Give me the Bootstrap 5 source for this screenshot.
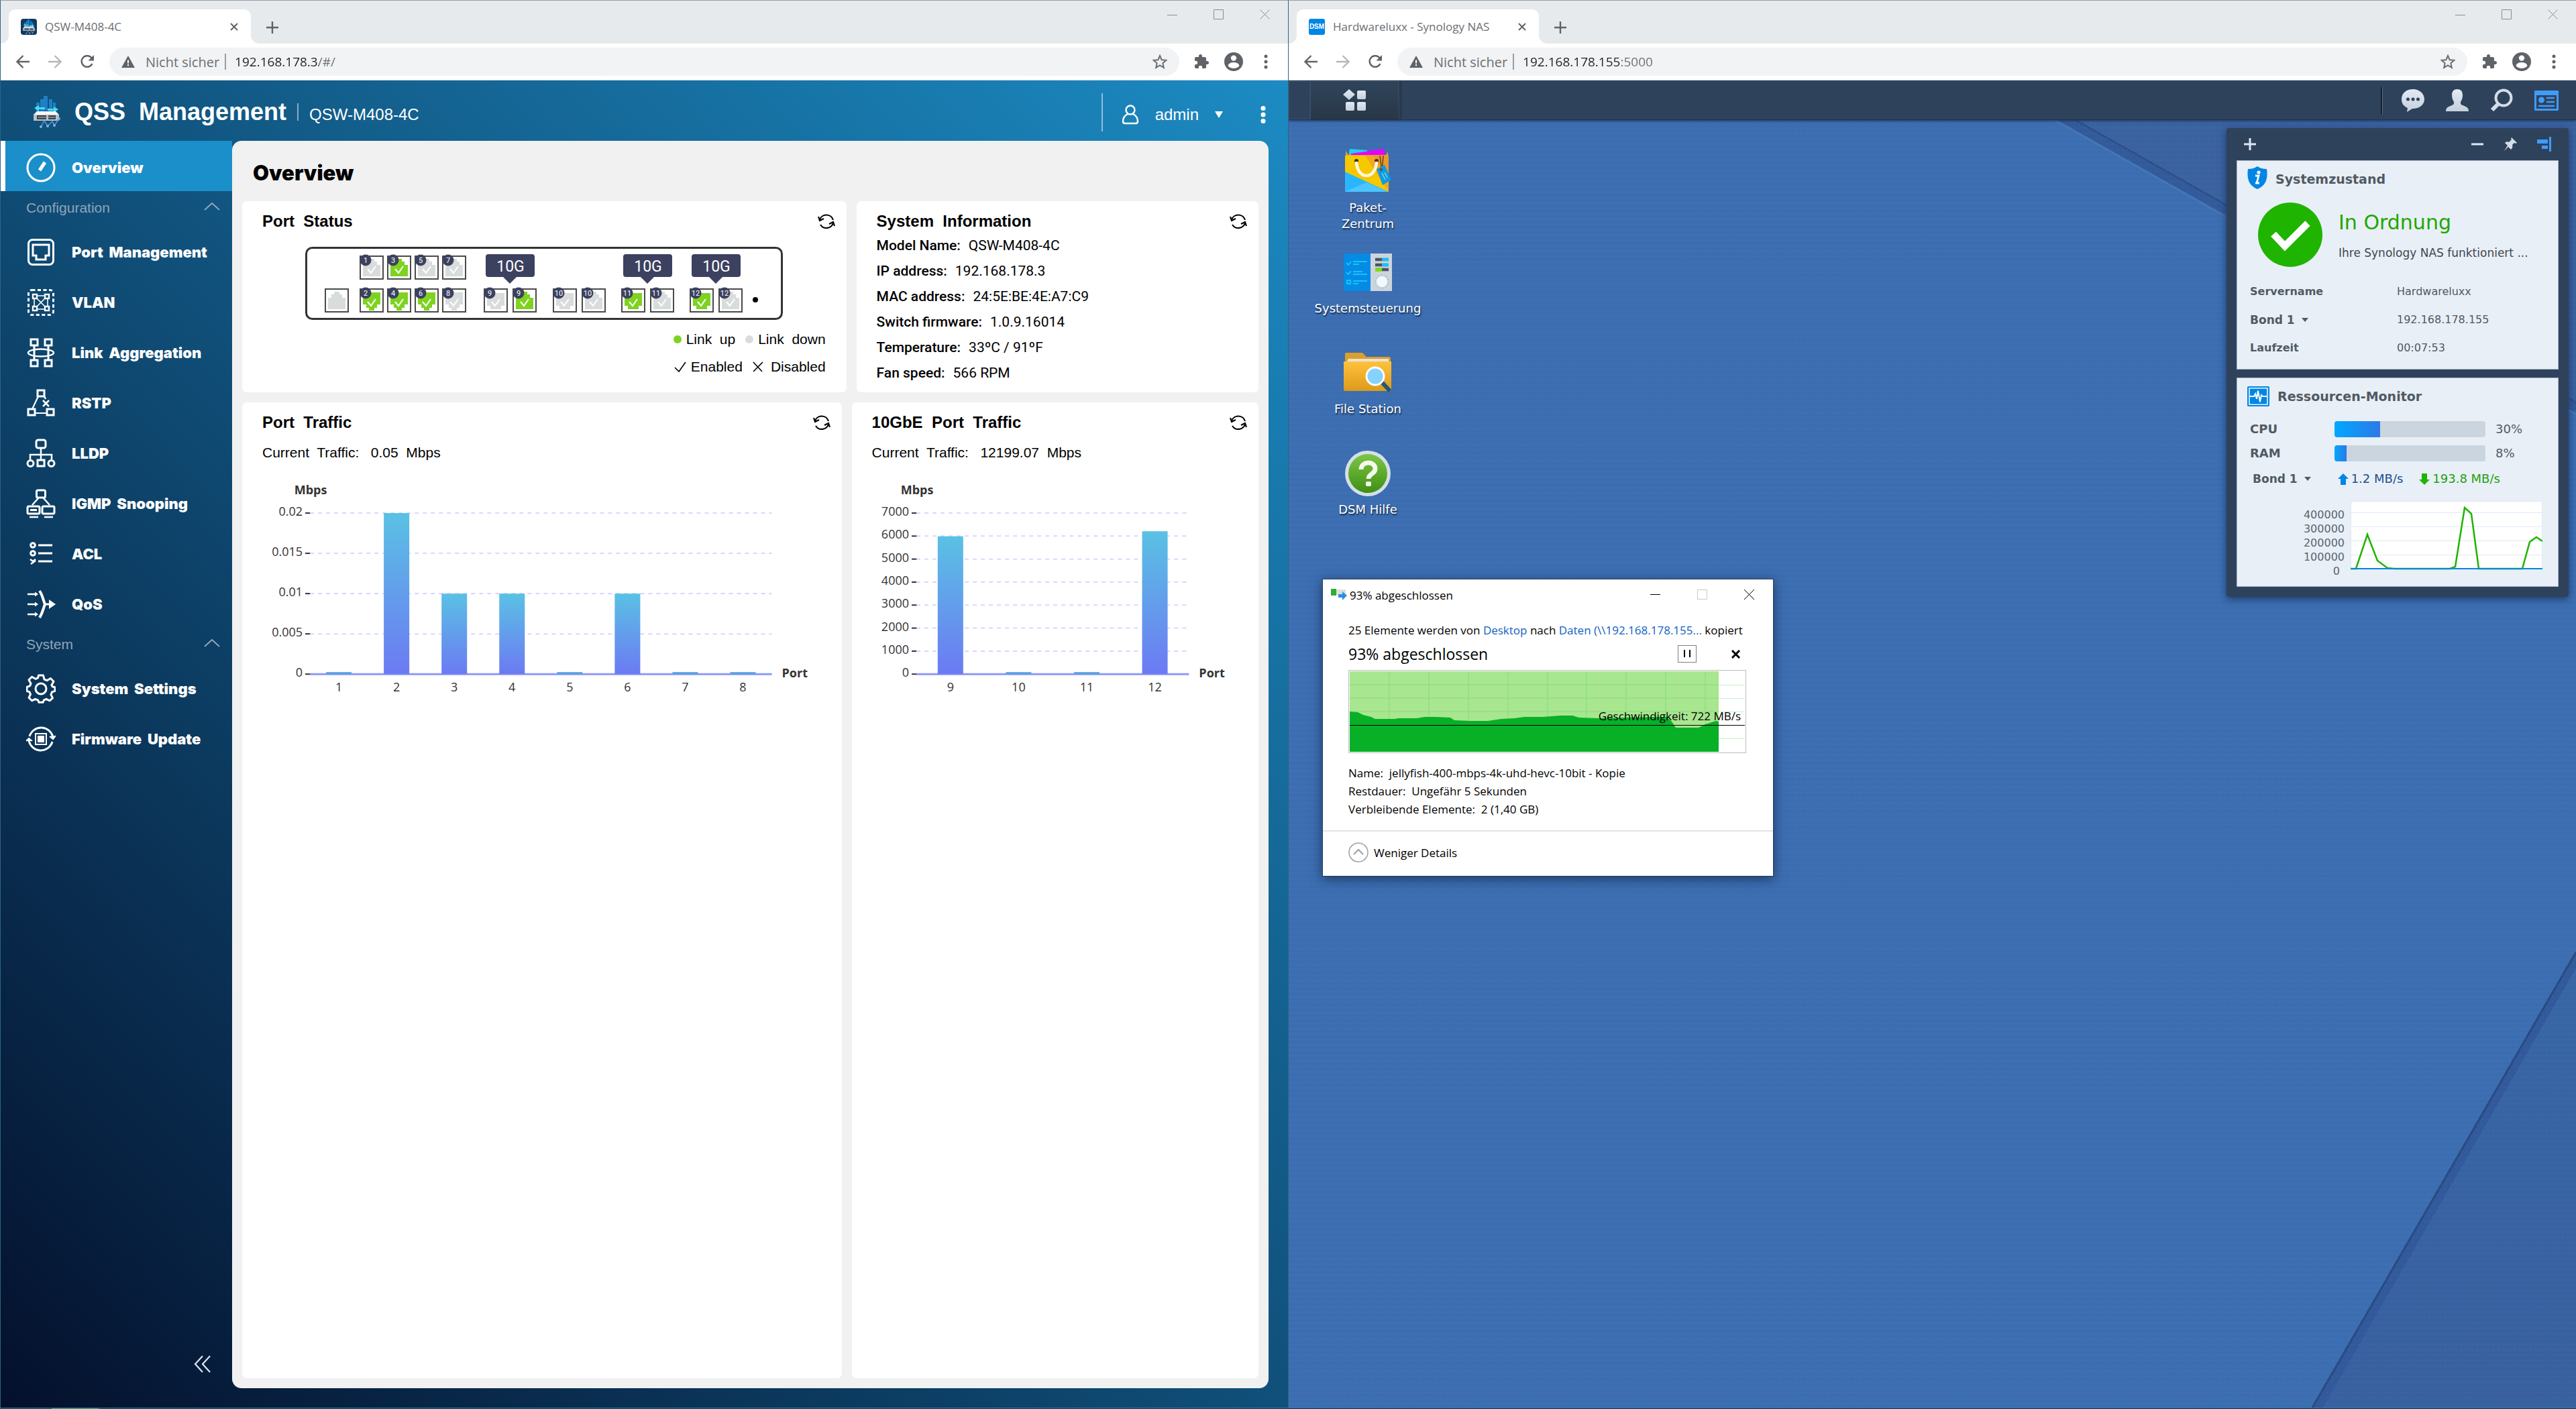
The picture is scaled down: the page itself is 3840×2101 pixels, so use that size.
<!DOCTYPE html>
<html lang="de">
<head>
<meta charset="utf-8">
<meta name="viewport" content="width=device-width, initial-scale=1">
<title>QSS Management / Synology NAS</title>
<link href="https://cdn.jsdelivr.net/npm/bootstrap@5.3.0/dist/css/bootstrap.min.css" rel="stylesheet">
<style>
  body { font-family: Roboto, "Liberation Sans", sans-serif; background: #16324f; min-height: 100vh; line-height: 1.2; }
  button { background: none; border: 0; padding: 0; color: inherit; }
  svg { display: block; flex: none; }
  .win { flex: 1 1 0; min-width: 0; border-left: 1px solid #2c6487; border-top: 1px solid #9a9ea2; position: relative; }

  /* browser frame */
  .tabstrip { height: 64px; background: #e6eaed; color: #5f6368; }
  .browser-tab { width: 361px; height: 51px; margin: 0 22px 0 12px; padding: 0 19px 0 18px; background: #fff; border-radius: 10px 10px 0 0; font: 17px "Open Sans", sans-serif; color: #6b6f73; position: relative; }
  .browser-tab::before, .browser-tab::after { content: ""; position: absolute; bottom: 0; width: 12px; height: 12px; }
  .browser-tab::before { left: -12px; background: radial-gradient(circle at 0 0, transparent 12px, #fff 12px); }
  .browser-tab::after { right: -12px; background: radial-gradient(circle at 100% 0, transparent 12px, #fff 12px); }
  .win-ctl { width: 69px; height: 42px; }
  .toolbar { height: 55px; padding: 0 9px; background: #fff; border-bottom: 1px solid #cfd3d7; color: #5f6368; }
  .tool-btn { width: 48px; height: 42px; }
  .omnibox { height: 42px; margin: 0 9px; padding: 0 18px; border-radius: 21px; background: #f1f3f4; font: 20px "Open Sans", sans-serif; color: #6b6f73; }
  .omnibox input { border: 0; outline: 0; padding: 0; font-size: 19px; color: #202124; -webkit-text-fill-color: transparent; background: linear-gradient(90deg, #202124 125px, #6b6f73 0); -webkit-background-clip: text; background-clip: text; }
  .omnibox .long-host { background-image: linear-gradient(90deg, #202124 145px, #6b6f73 0); }
  .omnibox .bar { width: 2px; height: 24px; background: #9a9da1; margin: 0 13px 0 8px; }

  /* switch management */
  .qss { background: linear-gradient(to top right, #04102c, #10507a 50%, #1c8bc3); font-family: "Liberation Sans", Arial, sans-serif; color: #fff; }
  .qss-head { height: 90px; padding: 4px 25px 0 46px; }
  .qss-name { font-size: 36px; font-weight: 700; }
  .qss-side { width: 345px; }
  .side-link { height: 75px; padding: 4px 0 0 38px; gap: 24px; color: #fff; font: 900 22px Inter, "Liberation Sans", sans-serif; text-decoration: none; }
  .side-link.active { background: #1b8fc9; border-left: 7px solid #fff; padding-left: 31px; }
  .side-link svg { width: 44px; height: 44px; fill: none; stroke: #fff; stroke-width: 3; }
  .side-sect { height: 51px; padding: 0 18px 2px 38px; font-size: 21px; color: #8fa6b8; }
  .panel { margin: 0 29px 29px 0; padding: 0 15px 15px; background: #f1f1f1; border-radius: 14px; color: #000; }
  .panel h1 { height: 90px; padding: 4px 16px 0; margin: 0; font: 900 31px Inter, sans-serif; display: flex; align-items: center; }
  .row-top { display: grid; grid-template-columns: 900fr 599fr; gap: 15px; }
  .row-bot { display: grid; grid-template-columns: 893fr 606fr; gap: 15px; margin-top: 15px; }
  .tile { background: #fff; border-radius: 7px; padding: 0 17px 0 30px; font-size: 21px; }
  .row-top .tile { height: 285px; }
  .tile h2 { font-size: 24px; font-weight: 700; margin: 0; }
  .tile-head { height: 60px; }
  .tile-head svg { width: 26px; height: 26px; }
  .tile-body { margin-right: 14px; }
  .traffic-now { margin: 0 0 22px; padding-top: 2px; }
  .facts { font: 21px Roboto, sans-serif; margin: -6px 0 0; }
  .facts div { height: 38px; display: flex; gap: 12px; }
  .facts dt { font-weight: 500; }
  .facts dd { margin: 0; }
  .legend-line { height: 41px; gap: 7px; }
  .led { width: 12px; height: 12px; border-radius: 6px; }
  .led-up { background: #7ed321; }
  .led-down { background: #d9dcdc; }
  .chart { width: 100%; font: 18px "Open Sans", sans-serif; fill: #333; }
  .chart .axis-name { font-weight: 700; }

  /* NAS desktop */
  .dsm { background: #3b6cb0; font-family: "DejaVu Sans", Verdana, sans-serif; position: relative; overflow: hidden; }
  .wallpaper { position: absolute; inset: 0; width: 100%; height: 100%; }
  .dsm-bar { position: relative; height: 59px; background: #2e425c; border-bottom: 1px solid #22344b; box-shadow: 0 1px 4px #1c3358; padding: 1px 26px 0 0; }
  .dsm-edge { width: 32px; border: 1px solid #3b4f66; }
  .dsm-menu { width: 133px; background: linear-gradient(#2f445b, #293747); border: 1px solid #3c5068; border-bottom: 0; margin-right: auto; box-shadow: 2px 0 3px #22303f; }
  .dsm-sep { width: 3px; height: 40px; background: linear-gradient(90deg, #17212e 60%, #5a6a7c 60%); margin-right: 28px; }
  .dsm-tray { gap: 32px; }
  .shortcuts { position: relative; width: 236px; padding-top: 35px; }
  .shortcut { height: 150px; color: #fff; font-size: 18px; line-height: 24px; text-decoration: none; text-align: center; text-shadow: 1px 2px 2px #10233f; }
  .shortcut .pic { height: 84px; }
  .widget { position: absolute; top: 71px; right: 11px; width: 510px; padding: 0 15px 15px; background: #2e425c; border-radius: 4px; box-shadow: 0 3px 12px #1d3866; }
  .widget-head { height: 48px; padding: 0 10px 0 11px; gap: 30px; }
  .wcard { background: #e9eff6; border: 1px solid #a9b8c8; color: #505a64; font-size: 16px; padding: 0 20px 10px 15px; }
  .wcard + .wcard { margin-top: 12px; padding-top: 12px; }
  .wcard h3 { font-size: 19px; font-weight: 700; margin: 0; }
  .wcard th { font-weight: 700; width: 223px; padding: 0 0 0 4px; }
  .wcard td { padding: 0; }
  .wcard tr { height: 42px; }
  .bond { font-size: 17px; font-weight: 700; color: #505a64; display: inline-flex; align-items: center; gap: 10px; }
  .meter-line { height: 36px; font-size: 18px; padding-left: 4px; }
  .meter-line b { width: 126px; }
  .meter-line .progress { width: 225px; height: 24px; border-radius: 4px; background: #cbd5df; margin-right: 15px; }
  .meter-line .progress-bar { background: linear-gradient(90deg, #00a8ff, #2d79e6); }
  .rate-line { height: 40px; }
  .rate-up { color: #22508f; }
  .rate-down { color: #1fa010; }
  .ok-title { font-size: 30px; color: #1fa800; line-height: 38px; }
  .ok-text { font-size: 17px; color: #3f4650; }

  /* copy dialog */
  .copydlg { position: absolute; left: 50px; top: 862px; width: 673px; height: 444px; background: #fff; border: 1px solid #2a4058; box-shadow: 0 4px 16px #1f3a66; font: 17px "Open Sans", sans-serif; color: #000; }
  .copydlg a { color: #0f62c4; text-decoration: none; }
  .copy-title { height: 46px; padding-left: 12px; }
  .copy-main { padding: 0 40px 0 38px; }
  .copy-line { padding-top: 18px; }
  .copy-done { font-size: 23px; }
  .copy-ctl { width: 70px; height: 44px; }
  .speed { width: 593px; height: 124px; font: 17px "Open Sans", sans-serif; }
  .copy-facts p { margin: 0; line-height: 27px; }
  .copy-foot { border-top: 2px solid #e3e3e3; padding-left: 38px; gap: 8px; }
  .taskline { height: 2px; background: linear-gradient(90deg, #1f3a4e 77px, #4a9a62 77px 145px, #16324f 150px); border-top: 1px solid #2a7fa5; }
</style>
<script src="https://cdn.jsdelivr.net/npm/bootstrap@5.3.0/dist/js/bootstrap.bundle.min.js"></script>
</head>
<body class="d-flex flex-column">

<svg width="0" height="0" class="position-absolute" aria-hidden="true">
  <defs>
    <symbol id="i-x" viewBox="0 0 12 12"><path d="M1 1l10 10M11 1L1 11" stroke="#5f6368" stroke-width="2" fill="none"/></symbol>
    <symbol id="i-plus" viewBox="0 0 20 20"><path d="M10 1v18M1 10h18" stroke="#5f6368" stroke-width="2.4" fill="none"/></symbol>
    <symbol id="w-min" viewBox="0 0 16 16"><path d="M0 8.5h15" stroke="#8a8d90" fill="none"/></symbol>
    <symbol id="w-max" viewBox="0 0 16 16"><path d="M.5 .5h14v14h-14z" stroke="#8a8d90" fill="none"/></symbol>
    <symbol id="w-close" viewBox="0 0 16 16"><path d="M.5 .5l14 14M14.500 .5l-14 14" stroke="#8a8d90" fill="none"/></symbol>
    <symbol id="i-back" viewBox="0 0 20 20"><path d="M20 10H2M10.500 1L1.500 10l9 9" stroke="currentColor" stroke-width="2.300" fill="none"/></symbol>
    <symbol id="i-fwd" viewBox="0 0 20 20"><path d="M0 10h18M9.500 1l9 9-9 9" stroke="#b4b7ba" stroke-width="2.300" fill="none"/></symbol>
    <symbol id="i-reload" viewBox="0 0 22 20"><path d="M18 5A8.300 8.300 0 1 0 18.500 13" stroke="currentColor" stroke-width="2.500" fill="none"/><path d="M21 0v8.500h-8.500z" fill="currentColor"/></symbol>
    <symbol id="i-warn" viewBox="0 0 20 18"><path d="M10 0l10 18H0z" fill="#5f6368"/><path d="M9 6.500h2v5H9zM9 13h2v2.300H9z" fill="#fff"/></symbol>
    <symbol id="i-star" viewBox="0 0 22 22"><path d="M11 2l2.600 6.200 6.800.6-5.100 4.500 1.500 6.600L11 16.400 5.200 19.900l1.500-6.600L1.600 8.800l6.800-.6z" stroke="currentColor" stroke-width="2" fill="none"/></symbol>
    <symbol id="i-puzzle" viewBox="0 0 22 22"><path d="M19.500 10H18V6c0-1-.9-2-2-2h-4V2.600a2.500 2.500 0 0 0-5 0V4H3C2 4 1 5 1 6v3.800h1.500a2.700 2.700 0 0 1 0 5.400H1V19c0 1.100 1 2 2 2h3.800v-1.500a2.700 2.700 0 0 1 5.400 0V21H16c1.100 0 2-.9 2-2v-4h1.500a2.500 2.500 0 0 0 0-5z" fill="currentColor"/></symbol>
    <symbol id="i-person" viewBox="0 0 28 28"><circle cx="14" cy="14" r="14" fill="currentColor"/><circle cx="14" cy="8.600" r="4.200" fill="#fff"/><ellipse cx="14" cy="19.500" rx="8.300" ry="4.400" fill="#fff"/></symbol>
    <symbol id="i-dots" viewBox="0 0 6 22"><circle cx="3" cy="3" r="2.500"/><circle cx="3" cy="11" r="2.500"/><circle cx="3" cy="19" r="2.500"/></symbol>
    <symbol id="i-refresh" viewBox="0 0 26 26"><g fill="none" stroke="#000" stroke-width="2.100"><path d="M3 10.500A10.500 10.500 0 0 1 23 11M23 15.500A10.500 10.500 0 0 1 4 18"/><path d="M1 6l2 6 6-3M25 20l-2-6-6 3"/></g></symbol>
    <symbol id="i-chev" viewBox="0 0 24 12"><path d="M1 11L12 1l11 10" stroke="#8fa6b8" stroke-width="2" fill="none"/></symbol>
    <symbol id="i-caret" viewBox="0 0 10 6"><path d="M0 0h10L5 6z" fill="#505a64"/></symbol>
    <symbol id="p-down" viewBox="0 0 36 36"><path d="M1 1h34v34H1z" fill="#fff" stroke="#4a4a4a" stroke-width="2"/></symbol>
    <path id="rj-up" d="M5 31V14h5v-5h4V5h8v4h4v5h5v17z"/>
    <path id="rj-dn" d="M5 6h26v18h-5v5h-4v4h-8v-4h-4v-5H5z"/>
    <path id="sfp-dn" d="M5 7h26v19h-5v5H10v-5H5z"/>
    <path id="tick" d="M12 20l5 6 7-10" fill="none" stroke="#fff" stroke-width="2"/>
    <linearGradient id="bar" x1="0" y1="0" x2="0" y2="1"><stop offset="0" stop-color="#5ac1e4"/><stop offset="1" stop-color="#6c7af3"/></linearGradient>
    <linearGradient id="silver" x1="0" y1="0" x2="0" y2="1"><stop offset="0" stop-color="#e2eaf3"/><stop offset="1" stop-color="#c4d0dc"/></linearGradient>
    <symbol id="qnap" viewBox="0 0 42 48"><path d="M6 10h5v16H6zM12 5h5v20h-5zM17 0h6v22h-6zM25 5h5v20h-5zM31 10h4v14h-4z" fill="#1f7fc4"/><path d="M3 18l7-4v3h9v3h-9v3zM39 20l-7-4v3h-9v3h9v3z" fill="#45dcf5"/><path d="M7 23h28l5 5H2z" fill="#f5f7f8"/><path d="M2 28h38v9H2z" fill="#b9c2c9"/><path d="M7 29h14v6H7zM24 29h11v6H24z" fill="#3b4650"/><path d="M9 32h25" stroke="#b9c2c9"/><path d="M13 46l5-9 5 8 7-7 3 6 7-10" fill="none" stroke="#5c97d8" stroke-width="1.500"/><g fill="#7fb0e8"><circle cx="13" cy="46" r="2"/><circle cx="23" cy="45" r="2"/><circle cx="33" cy="44" r="2"/><circle cx="40" cy="34" r="2"/></g></symbol>
  </defs>
</svg>

<div class="d-flex flex-fill">

<!-- left browser window -->
<section class="win d-flex flex-column">
  <div class="tabstrip d-flex">
    <div class="browser-tab d-flex align-items-center align-self-end">
      <svg width="24" height="24" viewBox="0 0 24 24"><rect width="24" height="24" rx="4" fill="#12395f"/><use href="#qnap" x="2" y="1" width="20" height="22"/></svg>
      <span class="flex-fill ms-2 ps-1">QSW-M408-4C</span>
      <button aria-label="Tab schließen"><svg width="12" height="12"><use href="#i-x"/></svg></button>
    </div>
    <button class="me-auto pt-3" aria-label="Neuer Tab"><svg width="20" height="20"><use href="#i-plus"/></svg></button>
    <button class="win-ctl d-flex align-items-center justify-content-center" aria-label="Minimieren"><svg width="16" height="16"><use href="#w-min"/></svg></button>
    <button class="win-ctl d-flex align-items-center justify-content-center" aria-label="Maximieren"><svg width="16" height="16"><use href="#w-max"/></svg></button>
    <button class="win-ctl d-flex align-items-center justify-content-center" aria-label="Schließen"><svg width="16" height="16"><use href="#w-close"/></svg></button>
  </div>
  <div class="toolbar d-flex align-items-center">
    <button class="tool-btn d-flex align-items-center justify-content-center" aria-label="Zurück"><svg width="20" height="20"><use href="#i-back"/></svg></button>
    <button class="tool-btn d-flex align-items-center justify-content-center" aria-label="Vor"><svg width="20" height="20"><use href="#i-fwd"/></svg></button>
    <button class="tool-btn d-flex align-items-center justify-content-center" aria-label="Neu laden"><svg width="22" height="20"><use href="#i-reload"/></svg></button>
    <div class="omnibox flex-fill d-flex align-items-center">
      <svg width="20" height="18"><use href="#i-warn"/></svg>
      <label for="url1" class="ms-3">Nicht sicher</label><span class="bar"></span>
      <input id="url1" class="flex-fill" value="192.168.178.3/#/">
      <svg width="22" height="22"><use href="#i-star"/></svg>
    </div>
    <button class="tool-btn d-flex align-items-center justify-content-center" aria-label="Erweiterungen"><svg width="22" height="22"><use href="#i-puzzle"/></svg></button>
    <button class="tool-btn d-flex align-items-center justify-content-center" aria-label="Profil"><svg width="28" height="28"><use href="#i-person"/></svg></button>
    <button class="tool-btn d-flex align-items-center justify-content-center" aria-label="Menü"><svg width="6" height="22" fill="#5f6368"><use href="#i-dots"/></svg></button>
  </div>

  <div class="qss flex-fill d-flex flex-column">
    <header class="qss-head d-flex align-items-center">
      <svg width="44" height="48"><use href="#qnap"/></svg>
      <span class="qss-name ms-3 ps-1">QSS&nbsp; Management</span>
      <svg class="mx-3" width="2" height="26"><path d="M1 0v26" stroke="#fff"/></svg>
      <span class="fs-4 pt-2">QSW-M408-4C</span>
      <svg class="ms-auto" width="2" height="57"><path d="M1 0v57" stroke="#fff"/></svg>
      <button class="d-flex align-items-center ms-4 me-5 fs-4 pt-2" type="button">
        <svg class="ms-1" width="26" height="30" viewBox="0 0 26 30" fill="none" stroke="#fff" stroke-width="2.400"><circle cx="13" cy="8" r="6.500"/><path d="M9 14C5 16 2 20 2 25q0 3 3 3h16q3 0 3-3c0-5-3-9-7-11"/></svg>
        <span class="mx-4">admin</span>
        <svg width="12" height="10" viewBox="0 0 12 10"><path d="M0 0h12L6 10z" fill="#fff"/></svg>
      </button>
      <button class="ms-2 pe-2 pt-2" type="button" aria-label="Mehr"><svg width="8" height="26" viewBox="0 0 6 22" fill="#fff"><circle cx="3" cy="3" r="3"/><circle cx="3" cy="11" r="3"/><circle cx="3" cy="19" r="3"/></svg></button>
    </header>

    <div class="d-flex flex-fill">
      <nav class="qss-side d-flex flex-column flex-shrink-0">
        <a href="#" class="side-link active d-flex align-items-center"><svg viewBox="0 0 44 44"><circle cx="22" cy="22" r="20"/><path d="M20 26l8-12" stroke-width="5"/></svg>Overview</a>
        <button class="side-sect d-flex align-items-center justify-content-between">Configuration<svg class="mb-1" width="24" height="12"><use href="#i-chev"/></svg></button>
        <a href="#" class="side-link d-flex align-items-center"><svg viewBox="0 0 44 44"><rect x="3.500" y="3.500" width="37" height="37" rx="6"/><path d="M10 11h24v16h-5v6H15v-6h-5z"/></svg>Port&nbsp; Management</a>
        <a href="#" class="side-link d-flex align-items-center"><svg viewBox="0 0 44 44"><rect x="3.500" y="3.500" width="37" height="37" rx="5" stroke-dasharray="5 3.500"/><path d="M14 14l16 16M30 14L14 30M12 14v16M32 14v16M14 12h16M14 32h16" stroke-width="1.600"/><g stroke-width="2.400" fill="#104b74"><rect x="10" y="10" width="6" height="6"/><rect x="28" y="10" width="6" height="6"/><rect x="10" y="28" width="6" height="6"/><rect x="28" y="28" width="6" height="6"/></g></svg>VLAN</a>
        <a href="#" class="side-link d-flex align-items-center"><svg viewBox="0 0 44 44" stroke-width="2.500"><rect x="7" y="2" width="10" height="9"/><rect x="28" y="2" width="10" height="9"/><rect x="7" y="33" width="10" height="9"/><rect x="28" y="33" width="10" height="9"/><path d="M12 11v22M33 11v22"/><ellipse cx="22" cy="22" rx="19" ry="5.500" stroke-width="2.500"/></svg>Link&nbsp; Aggregation</a>
        <a href="#" class="side-link d-flex align-items-center"><svg viewBox="0 0 44 44"><rect x="17" y="3" width="10" height="9"/><rect x="3" y="31" width="10" height="9"/><rect x="31" y="31" width="10" height="9"/><path d="M18 12L9 31M13 37h18" stroke-width="2.200"/><path d="M25 18l9 9M34 18l-9 9M27 12l2 4" stroke-width="2.500"/></svg>RSTP</a>
        <a href="#" class="side-link d-flex align-items-center"><svg viewBox="0 0 44 44"><rect x="15" y="2" width="14" height="12" rx="3"/><path d="M22 14v17M6 31v-7h32v7" stroke-width="2.500"/><rect x="17" y="32" width="10" height="9"/><circle cx="6.500" cy="37" r="4.500"/><circle cx="37.500" cy="37" r="4.500"/></svg>LLDP</a>
        <a href="#" class="side-link d-flex align-items-center"><svg viewBox="0 0 44 44"><rect x="15.500" y="2" width="13" height="11" rx="2"/><path d="M18 14l-9 10M26 14l9 10" stroke-width="2.500"/><rect x="2" y="26" width="18" height="11" rx="2"/><rect x="24" y="26" width="18" height="11" rx="2"/><path d="M6 31.500h10" /><path d="M5 42h13M27 42h13" stroke-width="2.500"/></svg>IGMP&nbsp; Snooping</a>
        <a href="#" class="side-link d-flex align-items-center"><svg viewBox="0 0 44 44"><circle cx="10" cy="9" r="3.300"/><circle cx="10" cy="21" r="3.300"/><path d="M6 30l4 3 4-3M7 37l7-5" stroke-width="2.500"/><path d="M18 9h21M18 21h21M18 33h21"/></svg>ACL</a>
        <a href="#" class="side-link d-flex align-items-center"><svg viewBox="0 0 44 44"><path d="M2 7h13M2 22h13M2 37h13" stroke-width="2.500"/><path d="M13 3.500l5 3.500-5 3.500zM13 18.500l5 3.500-5 3.500zM13 33.500l5 3.500-5 3.500z" fill="#fff" stroke="none"/><path d="M20 2c4 6 5 12 8 20-3 8-4 14-8 20" stroke-width="4"/><path d="M28 22h8" /><path d="M34 15l10 7-10 7z" fill="#fff" stroke="none"/></svg>QoS</a>
        <button class="side-sect d-flex align-items-center justify-content-between">System<svg class="mb-1" width="24" height="12"><use href="#i-chev"/></svg></button>
        <a href="#" class="side-link d-flex align-items-center"><svg viewBox="0 0 44 44"><circle cx="22" cy="22" r="8"/><path d="M18.500 2h7l1.500 6 4 1.700 5.400-3.200 4.600 4.800-3.200 5.400L39.500 19l3.500.8v5.500l-4.500 1.500-1.500 4 2.500 5-4.500 4-5-2.500-3.500 1.500-1.500 3.500h-6l-1.500-3.500-4-1.500-5 2.500-4.500-4.500 2.500-5-1.500-3.500-4-1.500v-6l4.500-1.500 1.500-3.500-3-5.500 4.500-4.500 5.500 3 3.500-1.500z" stroke-linejoin="round"/></svg>System&nbsp; Settings</a>
        <a href="#" class="side-link d-flex align-items-center"><svg viewBox="0 0 44 44"><path d="M5 18A18 18 0 0 1 40 20M39 26A18 18 0 0 1 4 24"/><path d="M35 18l5 4 4-5M0 25l4-4 5 4" fill="#fff" stroke-width="2"/><rect x="14" y="14" width="16" height="16" stroke-width="2"/><rect x="17" y="17" width="10" height="10" fill="#fff" stroke="none"/></svg>Firmware&nbsp; Update</a>
        <button class="mt-auto ms-auto mb-5 pb-1 me-4 pe-2" aria-label="Einklappen"><svg width="25" height="26" viewBox="0 0 25 26" fill="none" stroke="#dfe6ee" stroke-width="2.200"><path d="M13 1L2 13l11 12M24 1L13 13l11 12"/></svg></button>
      </nav>

      <main class="panel flex-fill d-flex flex-column">
        <h1>Overview</h1>
        <div class="row-top">
          <article class="tile">
            <div class="tile-head d-flex align-items-center justify-content-between"><h2>Port&nbsp; Status</h2><button aria-label="Aktualisieren"><svg><use href="#i-refresh"/></svg></button></div>
            <div class="tile-body">
              <svg class="mx-auto mt-2" width="712" height="109" viewBox="0 0 712 109" id="device"><rect x="1.500" y="1.500" width="709" height="106" rx="9" fill="#fff" stroke="#333" stroke-width="3"/></svg>
              <div class="legend-line d-flex align-items-center justify-content-end mt-2"><span class="led led-up"></span>Link&nbsp; up<span class="led led-down ms-2"></span>Link&nbsp; down</div>
              <div class="legend-line d-flex align-items-center justify-content-end"><svg width="18" height="18" viewBox="0 0 18 18"><path d="M1 10l6 6L17 2" fill="none" stroke="#000" stroke-width="1.600"/></svg>Enabled<svg class="ms-2" width="16" height="16" viewBox="0 0 16 16"><path d="M1 1l13 14M15 1L1 15" fill="none" stroke="#000" stroke-width="1.600"/></svg><span class="ms-1">Disabled</span></div>
            </div>
          </article>
          <article class="tile">
            <div class="tile-head d-flex align-items-center justify-content-between"><h2>System&nbsp; Information</h2><button aria-label="Aktualisieren"><svg><use href="#i-refresh"/></svg></button></div>
            <dl class="facts">
              <div><dt>Model Name:</dt><dd>QSW-M408-4C</dd></div>
              <div><dt>IP address:</dt><dd>192.168.178.3</dd></div>
              <div><dt>MAC address:</dt><dd>24:5E:BE:4E:A7:C9</dd></div>
              <div><dt>Switch firmware:</dt><dd>1.0.9.16014</dd></div>
              <div><dt>Temperature:</dt><dd>33ºC / 91ºF</dd></div>
              <div><dt>Fan speed:</dt><dd>566 RPM</dd></div>
            </dl>
          </article>
        </div>
        <div class="row-bot flex-fill">
          <article class="tile">
            <div class="tile-head d-flex align-items-center justify-content-between"><h2>Port&nbsp; Traffic</h2><button aria-label="Aktualisieren"><svg><use href="#i-refresh"/></svg></button></div>
            <div class="tile-body">
              <p class="traffic-now">Current&nbsp; Traffic:&nbsp;&nbsp; 0.05&nbsp; Mbps</p>
              <svg class="chart" viewBox="0 0 832 330" id="chart1"></svg>
            </div>
          </article>
          <article class="tile">
            <div class="tile-head d-flex align-items-center justify-content-between"><h2>10GbE&nbsp; Port&nbsp; Traffic</h2><button aria-label="Aktualisieren"><svg><use href="#i-refresh"/></svg></button></div>
            <div class="tile-body">
              <p class="traffic-now">Current&nbsp; Traffic:&nbsp;&nbsp; 12199.07&nbsp; Mbps</p>
              <svg class="chart" viewBox="0 0 545 330" id="chart2"></svg>
            </div>
          </article>
        </div>
      </main>
    </div>
  </div>
</section>

<!-- right browser window -->
<section class="win d-flex flex-column">
  <div class="tabstrip d-flex">
    <div class="browser-tab d-flex align-items-center align-self-end">
      <svg width="24" height="24" viewBox="0 0 24 24"><rect width="24" height="24" rx="3" fill="#0086e5"/><text x="12" y="15" font-family="Liberation Sans" font-weight="700" font-size="10" fill="#fff" text-anchor="middle">DSM</text></svg>
      <span class="flex-fill ms-2 ps-1">Hardwareluxx - Synology NAS</span>
      <button aria-label="Tab schließen"><svg width="12" height="12"><use href="#i-x"/></svg></button>
    </div>
    <button class="me-auto pt-3" aria-label="Neuer Tab"><svg width="20" height="20"><use href="#i-plus"/></svg></button>
    <button class="win-ctl d-flex align-items-center justify-content-center" aria-label="Minimieren"><svg width="16" height="16"><use href="#w-min"/></svg></button>
    <button class="win-ctl d-flex align-items-center justify-content-center" aria-label="Maximieren"><svg width="16" height="16"><use href="#w-max"/></svg></button>
    <button class="win-ctl d-flex align-items-center justify-content-center" aria-label="Schließen"><svg width="16" height="16"><use href="#w-close"/></svg></button>
  </div>
  <div class="toolbar d-flex align-items-center">
    <button class="tool-btn d-flex align-items-center justify-content-center" aria-label="Zurück"><svg width="20" height="20"><use href="#i-back"/></svg></button>
    <button class="tool-btn d-flex align-items-center justify-content-center" aria-label="Vor"><svg width="20" height="20"><use href="#i-fwd"/></svg></button>
    <button class="tool-btn d-flex align-items-center justify-content-center" aria-label="Neu laden"><svg width="22" height="20"><use href="#i-reload"/></svg></button>
    <div class="omnibox flex-fill d-flex align-items-center">
      <svg width="20" height="18"><use href="#i-warn"/></svg>
      <label for="url2" class="ms-3">Nicht sicher</label><span class="bar"></span>
      <input id="url2" class="flex-fill long-host" value="192.168.178.155:5000">
      <svg width="22" height="22"><use href="#i-star"/></svg>
    </div>
    <button class="tool-btn d-flex align-items-center justify-content-center" aria-label="Erweiterungen"><svg width="22" height="22"><use href="#i-puzzle"/></svg></button>
    <button class="tool-btn d-flex align-items-center justify-content-center" aria-label="Profil"><svg width="28" height="28"><use href="#i-person"/></svg></button>
    <button class="tool-btn d-flex align-items-center justify-content-center" aria-label="Menü"><svg width="6" height="22" fill="#5f6368"><use href="#i-dots"/></svg></button>
  </div>

  <div class="dsm flex-fill">
    <svg class="wallpaper" viewBox="0 0 1919 1981" preserveAspectRatio="none" aria-hidden="true">
      <defs>
        <pattern id="weave" width="8" height="8" patternUnits="userSpaceOnUse"><path d="M0 2l4 3 4-3" fill="none" stroke="#2c5ea6" stroke-opacity=".25"/><path d="M-4 6l4 3 4-3 4 3" fill="none" stroke="#4b7cbb" stroke-opacity=".25"/></pattern>
        <linearGradient id="fold" x1="0" y1="0" x2="0" y2="1"><stop offset="0" stop-color="#3866a5"/><stop offset="1" stop-color="#39609f"/></linearGradient>
      </defs>
      <rect width="1919" height="1981" fill="#3c6eb1"/>
      <path d="M1050 0L1919 496V0z" fill="#3b629f"/>
      <path d="M1050 -10L1919 481" stroke="#2a4b83" stroke-width="3"/>
      <path d="M1050 -2L1919 489" stroke="#335a99" stroke-width="13"/>
      <path d="M1050 7L1919 498" stroke="#4577b6" stroke-width="3"/>
      <path d="M1919 1301L1526 1981H1919z" fill="url(#fold)"/>
      <path d="M1924 1304L1533 1984" stroke="#32599a" stroke-width="12"/>
      <path d="M1919 1301L1526 1981" stroke="#28497f" stroke-width="3"/>
      <rect width="1919" height="1981" fill="url(#weave)"/>
    </svg>

    <header class="dsm-bar d-flex">
      <span class="dsm-edge"></span>
      <button class="dsm-menu d-flex align-items-center justify-content-center" aria-label="Hauptmenü"><svg width="36" height="34" viewBox="0 0 36 34" fill="url(#silver)"><path d="M9 0l9 8-9 8-9-8z"/><rect x="21" y="2" width="13" height="13" rx="2"/><rect x="4" y="19" width="13" height="13" rx="2"/><rect x="21" y="19" width="13" height="13" rx="2"/></svg></button>
      <span class="dsm-sep align-self-center"></span>
      <div class="dsm-tray d-flex align-items-center">
        <button aria-label="Benachrichtigungen"><svg width="34" height="36" viewBox="0 0 34 36"><path d="M17 1C7 1 0 7 0 16c0 7 4 11 9 13l-1 6 8-5c11 0 18-6 18-14S27 1 17 1z" fill="url(#silver)"/><g fill="#2e425c"><circle cx="9.500" cy="16" r="2.500"/><circle cx="17" cy="16" r="2.500"/><circle cx="24.500" cy="16" r="2.500"/></g></svg></button>
        <button aria-label="Konto"><svg width="34" height="36" viewBox="0 0 34 36"><path d="M17 1c5 0 8 3 8 9 0 5-2 8-3 10 0 3 0 4 3 5 5 2 9 3 9 9H0c0-6 4-7 9-9 3-1 3-2 3-5-1-2-3-5-3-10 0-6 3-9 8-9z" fill="url(#silver)"/></svg></button>
        <button aria-label="Suchen"><svg width="34" height="36" viewBox="0 0 34 36" fill="none" stroke="#d3dde7"><circle cx="20" cy="14" r="11.500" stroke-width="4"/><path d="M12 23l-9 9" stroke-width="6"/></svg></button>
        <button aria-label="Widgets"><svg width="36" height="30" viewBox="0 0 36 30"><rect width="36" height="30" rx="1" fill="#3f9cfa"/><path d="M3 7h30v20H3z" fill="#2e425c"/><circle cx="10.500" cy="14" r="4.500" fill="#3f9cfa"/><path d="M18 11h12M18 17h12M6 23h24" stroke="#3f9cfa" stroke-width="2.600"/></svg></button>
      </div>
    </header>

    <nav class="shortcuts d-flex flex-column">
      <a href="#" class="shortcut d-flex flex-column align-items-center">
        <span class="pic d-flex align-items-center pb-1"><svg width="70" height="68" viewBox="0 0 70 68"><path d="M8 2l26 2v10H6z" fill="#22d0f5"/><path d="M10 9l49-7 3 14H10z" fill="#e800ff"/><path d="M2 5l4 6h56l3-5v8H2z" fill="#f0a318"/><path d="M1 12h65v54H1z" fill="#f6c800"/><path d="M40 12h26v54z" fill="#e99a2c"/><path d="M31 12h13l22 40v14z" fill="#f3a81f"/><path d="M1 36l65 30H1z" fill="#29b6ff"/><path d="M1 66l32-14 33 14z" fill="#4cc6ff"/><circle cx="18" cy="20" r="3" fill="#4a3010"/><circle cx="48" cy="20" r="3" fill="#4a3010"/><path d="M18 21c1 28 29 28 30 0" fill="none" stroke="#fff6dc" stroke-width="4.500"/><path d="M53 12l3 24M58 12l-2 24" stroke="#6b3f12" stroke-width="1.500"/><path d="M48 32l12-6 10 22-13 8z" fill="#0f9be0"/><circle cx="55" cy="33" r="2" fill="#7a4a10"/><path d="M56 38l5 10M60 37l4 8" stroke="#bfe6ff"/></svg></span>
        <span>Paket-<br>Zentrum</span></a>
      <a href="#" class="shortcut d-flex flex-column align-items-center">
        <span class="pic d-flex align-items-center"><svg width="72" height="56" viewBox="0 0 72 56"><path d="M0 0h40v56H0z" fill="#058be6"/><path d="M40 0h32v56H40z" fill="#ccd5dd"/><g stroke="#17c3f7" stroke-width="2" fill="none"><path d="M4 14l3 3 4-5M14 12h21M14 16h9M4 28l3 3 4-5M14 27h14M14 31h21M5 40h5v5H5zM14 41h21M14 45h8"/></g><path d="M47 9h20M47 17h20M47 24h20" stroke="#4a5563" stroke-width="4.500"/><path d="M57 9h10M57 17h10" stroke="#17c3f7" stroke-width="4.500"/><path d="M47 24h10" stroke="#7be000" stroke-width="5"/><circle cx="57" cy="42" r="10" fill="none" stroke="#aab4be" stroke-width="1.500" stroke-dasharray="1.500 3"/><circle cx="57" cy="42" r="8" fill="#eefafc"/></svg></span>
        <span>Systemsteuerung</span></a>
      <a href="#" class="shortcut d-flex flex-column align-items-center">
        <span class="pic d-flex align-items-center"><svg width="74" height="60" viewBox="0 0 74 60"><defs><linearGradient id="fold2" x1="0" y1="0" x2="0" y2="1"><stop offset="0" stop-color="#ffc23d"/><stop offset="1" stop-color="#dc9a1a"/></linearGradient></defs><path d="M3 2q0-2 2-2h24l6 6h34q2 0 2 3v20H3z" fill="#dc9f2b"/><path d="M8 9h60v6H5z" fill="#e9e3d4"/><path d="M1 13h71v42q0 2-2 2H3q-2 0-2-2z" fill="url(#fold2)"/><path d="M57 43l13 14" stroke="#1d5878" stroke-width="6"/><circle cx="48" cy="35" r="13" fill="#86d2fd" stroke="#fff" stroke-width="3"/></svg></span>
        <span>File Station</span></a>
      <a href="#" class="shortcut d-flex flex-column align-items-center">
        <span class="pic d-flex align-items-center"><svg width="70" height="70" viewBox="0 0 70 70"><defs><linearGradient id="help" x1="0" y1="0" x2="0" y2="1"><stop offset="0" stop-color="#7cc645"/><stop offset="1" stop-color="#3f8f14"/></linearGradient></defs><circle cx="35" cy="35" r="34" fill="#d5dfe9"/><circle cx="35" cy="35" r="29" fill="url(#help)"/><path d="M25 29c0-13 21-13 21-1 0 8-10 7-10 15" fill="none" stroke="#f3f9ec" stroke-width="7"/><rect x="32" y="47" width="8" height="7" rx="2" fill="#f3f9ec"/></svg></span>
        <span>DSM Hilfe</span></a>
    </nav>

    <aside class="widget">
      <div class="widget-head d-flex align-items-center">
        <button class="me-auto" aria-label="Hinzufügen"><svg width="18" height="18" viewBox="0 0 18 18"><path d="M9 0v18M0 9h18" stroke="#dfe8f0" stroke-width="3"/></svg></button>
        <button aria-label="Minimieren"><svg width="18" height="4"><path d="M0 2h18" stroke="#dfe8f0" stroke-width="3"/></svg></button>
        <button aria-label="Anheften"><svg width="20" height="20" viewBox="0 0 20 20"><path d="M12 0l8 8-2 1-2-1-3 3c1 3 0 5-2 7l-4-4-6 6 5-8-4-4c2-2 4-2 6-1l4-4-1-1z" fill="#d3dde7"/></svg></button>
        <button aria-label="Andocken"><svg width="22" height="22" viewBox="0 0 22 22" fill="#3f9cfa"><path d="M0 4h16v6H0zM7 13h9v5H7zM18 0h3v22h-3z"/></svg></button>
      </div>
      <div class="wcard">
        <div class="d-flex align-items-center gap-2 pt-2 pb-1"><svg class="me-1" width="30" height="34" viewBox="0 0 30 34"><path d="M15 0c5 3 9 4 14 4 2 14-1 25-14 30C2 29-1 18 1 4c5 0 9-1 14-4z" fill="#0086e5"/><circle cx="17" cy="9" r="2.600" fill="#fff"/><path d="M12 14h5l-3 11h4M12 25h3" stroke="#fff" stroke-width="2.800" fill="none"/></svg><h3 class="pt-1">Systemzustand</h3></div>
        <div class="d-flex align-items-center mt-3 mb-3">
          <svg class="mx-3" width="96" height="96" viewBox="0 0 96 96"><circle cx="48" cy="48" r="48" fill="#1fb400"/><path d="M23 47l17 18 34-34" fill="none" stroke="#fff" stroke-width="10.500"/></svg>
          <div class="ms-2"><div class="ok-title">In Ordnung</div><div class="ok-text pt-3 text-nowrap">Ihre Synology NAS funktioniert ...</div></div>
        </div>
        <table>
          <tbody>
            <tr><th scope="row">Servername</th><td>Hardwareluxx</td></tr>
            <tr><th scope="row"><button class="bond">Bond 1 <svg width="10" height="6"><use href="#i-caret"/></svg></button></th><td>192.168.178.155</td></tr>
            <tr><th scope="row">Laufzeit</th><td>00:07:53</td></tr>
          </tbody>
        </table>
      </div>
      <div class="wcard">
        <div class="d-flex align-items-center gap-2"><svg class="me-1" width="33" height="30" viewBox="0 0 33 32" preserveAspectRatio="none"><rect width="33" height="32" rx="2" fill="#0086e5"/><rect x="3" y="3" width="27" height="26" fill="none" stroke="#fff" stroke-width="1.500"/><path d="M4 16h6l2-4 2 8 2-13 3 18 2-11 2 2h6" fill="none" stroke="#fff" stroke-width="2"/></svg><h3>Ressourcen-Monitor</h3></div>
        <div class="pt-3">
        <div class="meter-line d-flex align-items-center"><b>CPU</b><div class="progress"><div class="progress-bar" style="width:30%"></div></div>30%</div>
        <div class="meter-line d-flex align-items-center"><b>RAM</b><div class="progress"><div class="progress-bar" style="width:8%"></div></div>8%</div>
        </div>
        <div class="meter-line rate-line d-flex align-items-center"><div class="d-flex ps-1 me-4 pe-3"><button class="bond">Bond 1 <svg width="10" height="6"><use href="#i-caret"/></svg></button></div>
          <svg class="me-1" width="16" height="17" viewBox="0 0 16 17"><path d="M8 0l8 8h-4v9H4V8H0z" fill="#0086e5"/></svg><span class="rate-up">1.2 MB/s</span>
          <svg class="ms-4 me-1" width="16" height="17" viewBox="0 0 16 17"><path d="M8 17l8-8h-4V0H4v9H0z" fill="#1fb400"/></svg><span class="rate-down">193.8 MB/s</span></div>
        <svg width="440" height="130" viewBox="0 0 440 130" font-size="16" fill="#5a6570" text-anchor="end">
          <rect x="154" y="13" width="286" height="102" fill="#fff"/>
          <path d="M154 13.500h286M154 30.500h286M154 51.500h286M154 72.500h286M154 93.500h286M154.500 14v100M439.500 14v100" stroke="#dfe9f3" fill="none"/>
          <text x="145" y="39">400000</text><text x="145" y="60">300000</text><text x="145" y="81">200000</text><text x="145" y="102">100000</text><text x="138" y="123">0</text>
          <path d="M154 114h8L179 63l15 39 15 11 10 1h83l8-3L324 23l10 9 11 82h65l11-40 10-7 9 6" fill="none" stroke="#1fb400" stroke-width="2.500"/>
          <path d="M154 114h286" stroke="#0086e5" stroke-width="2"/>
        </svg>
      </div>
    </aside>
  </div>

  <div class="copydlg d-flex flex-column" role="dialog" aria-label="93% abgeschlossen">
    <div class="copy-title d-flex align-items-center">
      <svg class="me-1" width="24" height="18" viewBox="0 0 24 18"><path d="M0 1h22v8H0z" fill="#ddd"/><path d="M0 0h8v10H0z" fill="#2fae36"/><path d="M11 8h6V4l7 6-7 7v-4h-6z" fill="#2e8fe0"/></svg>
      <span class="me-auto">93% abgeschlossen</span>
      <button class="copy-ctl d-flex align-items-center justify-content-center" aria-label="Minimieren"><svg width="16" height="16"><path d="M0 7.500h15" stroke="#000"/></svg></button>
      <button class="copy-ctl d-flex align-items-center justify-content-center" aria-label="Maximieren" disabled><svg width="16" height="16"><path d="M.5 .5h14v14H.5z" fill="none" stroke="#c8c8c8"/></svg></button>
      <button class="copy-ctl d-flex align-items-center justify-content-center" aria-label="Schließen"><svg width="16" height="16"><path d="M0 0l15 15M15 0L0 15" stroke="#000"/></svg></button>
    </div>
    <div class="copy-main flex-fill">
      <div class="copy-line text-nowrap">25 Elemente werden von <a href="#">Desktop</a> nach <a href="#">Daten (\\192.168.178.155...</a> kopiert</div>
      <div class="d-flex align-items-center pt-2 mb-2">
        <span class="copy-done me-auto">93% abgeschlossen</span>
        <button aria-label="Anhalten"><svg width="28" height="26" viewBox="0 0 28 26"><path d="M.5 .5h27v25H.5z" fill="none" stroke="#000" stroke-dasharray="1 1"/><path d="M10 7v11M18 7v11" stroke="#000" stroke-width="2"/></svg></button>
        <button class="ms-5 ps-1 me-2" aria-label="Abbrechen"><svg width="14" height="13" viewBox="0 0 14 13"><path d="M1 1l11 11M12 1L1 12" stroke="#000" stroke-width="3"/></svg></button>
      </div>
      <svg class="speed" viewBox="0 0 593 124">
        <rect x=".5" y=".5" width="592" height="123" fill="#fff" stroke="#bcbcbc"/>
        <path d="M552 22.500h39M552 42.500h39M552 62.500h39M552 102.500h39" stroke="#c4efcb"/>
        <rect x="2" y="2" width="550" height="120" fill="#a8e68f"/>
        <path d="M61 2v120M120 2v120M179 2v120M238 2v120M297 2v120M355 2v120M414 2v120M473 2v120M532 2v120M2 22h550M2 42h550M2 62h550" stroke="#86dc7c" fill="none"/>
        <path d="M2 62l12 1 8 4 12 3 6 3h30l4-1h28l12-2h16l22 1 6 4 24 1h26l20-3 20-1 14-2h28l26-2h18l10 3 28 1 40-1 44-1h18l8 7 6 9h34l10-5 16-5 4 1V122H2z" fill="#08b028"/>
        <path d="M2 82.500h589" stroke="#000"/>
        <text x="585" y="75" text-anchor="end">Geschwindigkeit: 722 MB/s</text>
      </svg>
      <div class="copy-facts pt-3"><p>Name:&nbsp; jellyfish-400-mbps-4k-uhd-hevc-10bit - Kopie</p><p>Restdauer:&nbsp; Ungefähr 5 Sekunden</p><p>Verbleibende Elemente:&nbsp; 2 (1,40 GB)</p></div>
    </div>
    <div class="copy-foot d-flex align-items-center pb-1"><button class="d-flex align-items-center gap-2 py-3"><svg width="30" height="30" viewBox="0 0 30 30" fill="none" stroke="#a0a0a0" stroke-width="1.500"><circle cx="15" cy="15" r="14"/><path d="M8 18l7-7 7 7" stroke-width="2"/></svg>Weniger Details</button></div>
  </div>
</section>
</div>
<div class="taskline"></div>

<script>
  // switch front panel: [x, y, label, socket shape, link up]
  const ports = [
    [81,13,1,'rj-up',0],[122,13,3,'rj-up',1],[163,13,5,'rj-up',0],[204,13,7,'rj-up',0],
    [81,62,2,'rj-dn',1],[122,62,4,'rj-dn',1],[163,62,6,'rj-dn',1],[204,62,8,'rj-dn',0],
    [266,62,9,'sfp-dn',0],[309,62,9,'rj-up',1],[369,62,10,'sfp-dn',0],[412,62,10,'rj-up',0],
    [471,62,11,'sfp-dn',1],[514,62,11,'rj-up',0],[573,62,12,'sfp-dn',1],[616,62,12,'rj-up',0]];
  let d = '<g transform="translate(29 62)"><use href="#p-down" width="36" height="36"/><use href="#rj-up" fill="#d9dcdc"/></g>';
  for (const [x, y, n, s, up] of ports)
    d += `<g transform="translate(${x} ${y})"><use href="#p-down" width="36" height="36"/><use href="#${s}" fill="${up ? '#7ed321' : '#d9dcdc'}"/><use href="#tick"/><circle cx="9" cy="7" r="8.500" fill="#3c4160"/><text x="9" y="11" font-size="11" fill="#fff" text-anchor="middle" font-family="Roboto">${n}</text></g>`;
  for (const x of [269, 474, 576])
    d += `<g transform="translate(${x} 11)"><path d="M4 0h65q4 0 4 4v26q0 4-4 4H46l-10 10-10-10H4q-4 0-4-4V4q0-4 4-4z" fill="#3c4160"/><text x="37" y="26" font-size="23" fill="#fff" text-anchor="middle" font-family="Roboto">10G</text></g>`;
  device.insertAdjacentHTML('beforeend', d + '<circle cx="671" cy="79" r="4"/>');

  function barChart(el, x0, x1, ticks, max, bars) {
    const base = 296, top = 56, y = v => base - (base - top) * v / max, slot = (x1 - x0) / bars.length;
    let s = `<text class="axis-name" x="${x0 + 1}" y="28" text-anchor="middle">Mbps</text>`;
    for (const t of ticks)
      s += `<text x="${x0 - 11}" y="${y(t) + 4}" text-anchor="end">${t}</text><path d="M${x0 - 7} ${y(t)}h8" stroke="#333" stroke-width="2"/>` +
        (t ? `<path d="M${x0} ${y(t)}H${x1}" stroke="#d3d9ff" stroke-width="2" stroke-dasharray="6 6"/>` : '');
    s += `<path d="M${x0} ${base}H${x1}" stroke="#8f9af8" stroke-width="3"/>`;
    bars.forEach(([n, v], i) => {
      const c = x0 + slot * (i + .5), h = Math.max(base - y(v), 3);
      s += `<rect x="${c - 19}" y="${base - h}" width="38" height="${h}" fill="${v ? 'url(#bar)' : '#58a0e0'}"/><text x="${c}" y="322" text-anchor="middle">${n}</text>`;
    });
    el.innerHTML = s + `<text class="axis-name" x="${x1 + 15}" y="301">Port</text>`;
  }
  barChart(chart1, 71, 759, [0, .005, .01, .015, .02], .02, [[1,0],[2,.02],[3,.01],[4,.01],[5,0],[6,.01],[7,0],[8,0]]);
  barChart(chart2, 66, 472, [0, 1000, 2000, 3000, 4000, 5000, 6000, 7000], 7000, [[9,5990],[10,0],[11,0],[12,6209]]);
</script>
</body>
</html>
